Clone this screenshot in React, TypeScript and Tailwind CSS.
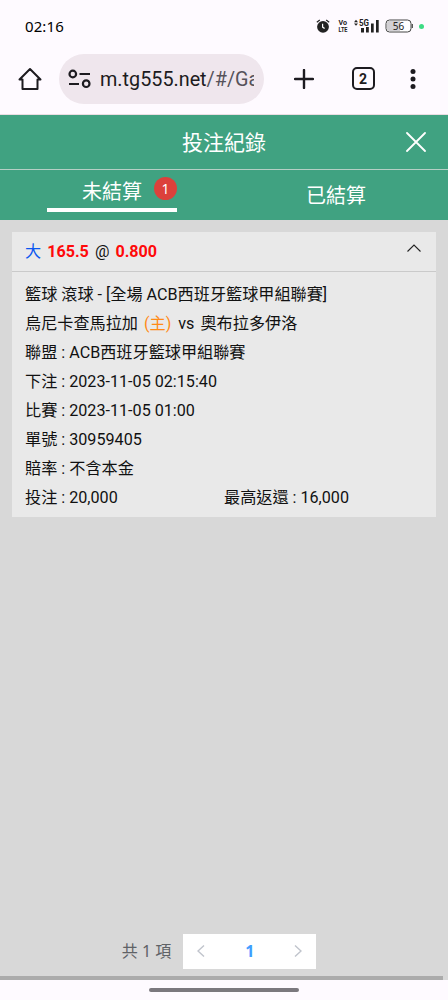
import { useState } from 'react';

const details = [
    { label: '聯盟', value: 'ACB西班牙籃球甲組聯賽' },
    { label: '下注', value: '2023-11-05 02:15:40' },
    { label: '比賽', value: '2023-11-05 01:00' },
    { label: '單號', value: '30959405' },
    { label: '賠率', value: '不含本金' },
];

function StatusBar() {
    return (
        <div className="flex items-center h-[50px] pl-[25px] pr-6 pt-[2px] text-[#1d1b20]">
            <span className="font-['Noto_Sans',sans-serif] text-[15px] tracking-[0.1px] text-black">02:16</span>
            <div className="flex items-center ml-auto">
                {/* Alarm */}
                <svg className="w-[14px] h-[14px]" viewBox="0 0 14 14">
                    <circle cx="7" cy="7.8" r="5.9" fill="#222" />
                    <path d="M.8 3.2 3.8.9M13.2 3.2 10.2.9" stroke="#222" strokeWidth="1.2" />
                    <path d="M6.6 4.8v3.3l2 1.5" fill="none" stroke="#fff" strokeWidth="1.2" />
                </svg>
                <svg className="w-[10px] h-[16px] ml-[8px] overflow-visible" viewBox="0 0 10 16" fill="#222" fontFamily="Roboto, sans-serif" fontWeight="700">
                    <text x=".5" y="6.5" fontSize="7.5" textLength="8.5" lengthAdjust="spacingAndGlyphs">Vo</text>
                    <text x=".5" y="14" fontSize="7.5" textLength="9" lengthAdjust="spacingAndGlyphs">LTE</text>
                </svg>
                {/* 5G signal */}
                <svg className="w-[25px] h-[14px] ml-[6px] overflow-visible" viewBox="0 0 25 14" fill="#222">
                    <path d="M0 3.2 2 .8 4 3.2zM0 4.4h4L2 6.8z" />
                    <text x="5" y="6.8" fontSize="9" fontWeight="700" fontFamily="Roboto, sans-serif" textLength="10" lengthAdjust="spacingAndGlyphs">5G</text>
                    <path d="M7 9h3v4.5H7zM12 8h2.8v5.5H12zM17 4.5h2.7v9H17zM22 1h2.7v12.5H22z" />
                </svg>
                {/* Battery */}
                <svg className="w-[28px] h-[14px] ml-[6px]" viewBox="0 0 28 14">
                    <rect x="1" y="1" width="25" height="12" rx="3.5" fill="#fff" stroke="#444" strokeWidth="1" />
                    <path d="M4 2h11v10H4a2 2 0 0 1-2-2V4a2 2 0 0 1 2-2z" fill="#d2d0d4" />
                    <path d="M27.3 5v4" stroke="#444" strokeWidth="1.2" />
                    <text x="13.5" y="10.8" fontSize="10" textAnchor="middle" fill="#222" fontFamily="Noto Sans, sans-serif">56</text>
                </svg>
                <span className="w-[5px] h-[5px] ml-[6px] rounded-full bg-[#3ddc84]" />
            </div>
        </div>
    );
}

function BrowserBar() {
    return (
        <div className="flex items-center h-[65px] pb-[7px] pl-[18px] border-b border-[#eadde3] text-[#1d1b20]">
            <svg className="w-6 h-6 shrink-0" viewBox="0 0 24 24" fill="none" stroke="currentColor" strokeWidth="2" strokeLinecap="round" strokeLinejoin="round">
                <path d="M1.5 12.5 12 2l10.5 10.5h-3V22h-15v-9.500z" />
            </svg>
            <div className="flex items-center w-[205px] h-[50px] ml-[17px] pl-[9px] pr-[10px] rounded-full bg-[#efe6ed]">
                <svg className="w-6 h-5 shrink-0" viewBox="0 0 24 20" fill="none" stroke="currentColor" strokeWidth="2.2">
                    <circle cx="4.8" cy="5" r="3.3" />
                    <path d="M11.5 5H22M1 15h10" />
                    <circle cx="18.2" cy="14.7" r="3.3" />
                </svg>
                <span className="ml-[8px] pt-[3px] w-[154px] overflow-hidden whitespace-nowrap font-['Roboto',sans-serif] text-[19.8px] text-[#1d1b20]">
                    m.tg555.net<span className="text-[#56525a]">/#/Ga</span>
                </span>
            </div>
            <svg className="w-5 h-5 ml-[29.5px] shrink-0" viewBox="0 0 20 20" stroke="currentColor" strokeWidth="2.4" strokeLinecap="round">
                <path d="M10 1v18M1 10h18" />
            </svg>
            <div className="flex items-center justify-center w-[23px] h-[23px] ml-[38px] pt-px shrink-0 rounded-[5px] border-2 border-[#1d1b20] font-['Roboto',sans-serif] text-[14px] font-bold">2</div>
            <svg className="w-[6px] h-5 ml-[35px] shrink-0" viewBox="0 0 6 20" fill="currentColor">
                <circle cx="3" cy="2.5" r="2.5" />
                <circle cx="3" cy="10" r="2.5" />
                <circle cx="3" cy="17.5" r="2.5" />
            </svg>
        </div>
    );
}

export default function App() {
    const [tab, setTab] = useState('open');
    const [expanded, setExpanded] = useState(true);

    return (
        <div className="flex flex-col w-[448px] h-[1000px] overflow-hidden bg-[#fefaff] font-['Roboto','Noto_Sans_CJK_TC',sans-serif] text-[16.15px] text-[#111]">
            <StatusBar />
            <BrowserBar />

            {/* Header */}
            <header className="bg-[#40a281] text-white">
                <div className="grid grid-cols-[1fr_auto_1fr] items-center h-[55px] border-b border-[#b5cfc5]">
                    <h1 className="col-start-2 pt-[2px] text-[21px] leading-none">投注紀錄</h1>
                    <button className="justify-self-end mr-[22px]">
                        <svg className="block w-5 h-5" viewBox="0 0 20 20" stroke="currentColor" strokeWidth="1.8" strokeLinecap="round">
                            <path d="M1 1l18 18M19 1 1 19" />
                        </svg>
                    </button>
                </div>
                <div className="grid grid-cols-2 h-[50px] text-[20px] leading-none">
                    <button onClick={() => setTab('open')} className="flex flex-col items-center pt-[7px]">
                        <span className="flex items-center justify-end w-[130px] h-[23px]">
                            <span className="pt-[7px]">未結算</span>
                            <span className="flex items-center justify-center w-[23px] h-[23px] ml-[12px] rounded-full bg-[#dc413b] font-['Noto_Sans',sans-serif] text-[14px]">1</span>
                        </span>
                        {tab === 'open' && <span className="w-[130px] h-1 mt-[8px] bg-white" />}
                    </button>
                    <button onClick={() => setTab('settled')} className="flex flex-col items-center pt-[16px]">
                        已結算
                    </button>
                </div>
            </header>

            <main className="flex flex-col flex-1 bg-[#d8d8d8] px-3 pt-3">
                {/* Bet card */}
                <section className="w-[424px] h-[285px] bg-[#e9e9e9]">
                    <div className="flex items-center h-10 pt-[2px] pl-[13px] pr-[15px] border-b border-[#cacaca]">
                        <span className="text-[#0b57f0]">大</span>
                        <span className="ml-[6px] font-bold text-[#ff0909]">165.5</span>
                        <span className="ml-[6px]">@</span>
                        <span className="ml-[6px] font-bold text-[#ff0909]">0.800</span>
                        <button onClick={() => setExpanded(!expanded)} className="ml-auto pb-[9px]">
                            <svg className="block w-[14px] h-[8px]" viewBox="0 0 14 8" fill="none" stroke="#222" strokeWidth="1.1">
                                <path d="M.5 7.5 7 1l6.5 6.5" />
                            </svg>
                        </button>
                    </div>
                    {expanded && (
                        <div className="pl-[13px] pt-[8px] leading-[29px] whitespace-nowrap">
                            <p>籃球 滾球 - [全場 ACB西班牙籃球甲組聯賽]</p>
                            <p className="flex">
                                <span>烏尼卡查馬拉加</span>
                                <span className="ml-[6px] text-[#ff8b17]">(主)</span>
                                <span className="ml-[7px]">vs</span>
                                <span className="ml-[6px]">奧布拉多伊洛</span>
                            </p>
                            {details.map((row) => (
                                <p key={row.label}>{row.label} : {row.value}</p>
                            ))}
                            <p className="flex">
                                <span className="w-[199px]">投注 : 20,000</span>
                                <span>最高返還 : 16,000</span>
                            </p>
                        </div>
                    )}
                </section>

                {/* Pagination */}
                <div className="flex items-center justify-center mt-auto mb-[7px] pr-[10px] text-[#5f6266]">
                    <span className="pb-[2px] font-['Noto_Sans','Noto_Sans_CJK_TC',sans-serif] text-[16px] leading-none">共 1 項</span>
                    <div className="flex items-center justify-between w-[133px] h-[35px] ml-[12px] px-[14px] pb-px bg-white">
                        <svg className="w-[8px] h-[12px]" viewBox="0 0 8 12" fill="none" stroke="#c0c4cc" strokeWidth="1.4">
                            <path d="M7 .5 1 6l6 5.5" />
                        </svg>
                        <span className="font-['Noto_Sans',sans-serif] text-[16px] font-bold text-[#409eff]">1</span>
                        <svg className="w-[8px] h-[12px]" viewBox="0 0 8 12" fill="none" stroke="#c0c4cc" strokeWidth="1.4">
                            <path d="M1 .5 7 6l-6 5.5" />
                        </svg>
                    </div>
                </div>
            </main>

            <div className="flex h-1 bg-[#d8d8d8]">
                <div className="w-[443px] bg-[#ababab]" />
            </div>
            <div className="flex justify-center h-5 pt-[7.5px]">
                <div className="w-[150px] h-1 rounded-full bg-[#7b787e]" />
            </div>
        </div>
    );
}
